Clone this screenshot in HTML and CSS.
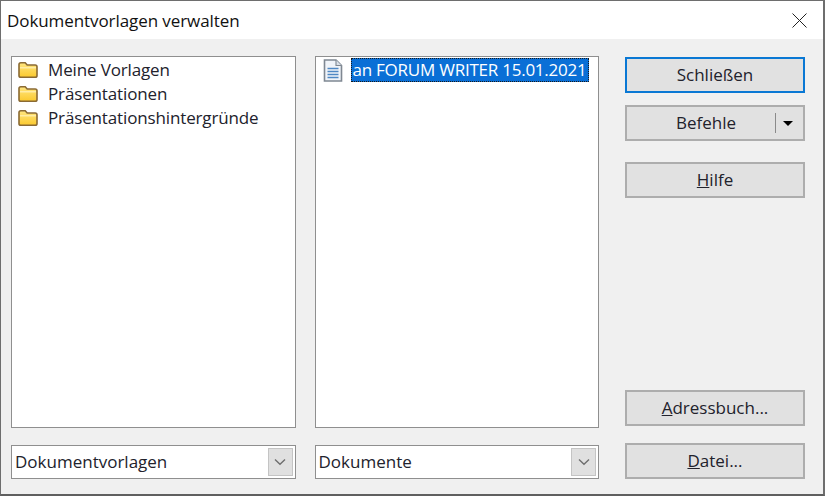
FILE: index.html
```html
<!DOCTYPE html>
<html lang="de">
<head>
<meta charset="utf-8">
<title>Dokumentvorlagen verwalten</title>
<link rel="stylesheet" href="styles.css">
</head>
<body>
<svg class="defs" width="0" height="0" aria-hidden="true">
  <defs>
    <linearGradient id="fold" x1="0" y1="0" x2="0" y2="1">
      <stop offset="0" stop-color="#ffe680"/>
      <stop offset="1" stop-color="#fbc92e"/>
    </linearGradient>
  </defs>
  <symbol id="folder" viewBox="0 0 20 18">
    <path d="M1 14.5V3.5Q1 1.8 2.8 1.8H7.2L9.2 4H17.2Q19 4 19 5.8V14.5Q19 16.3 17.2 16.3H2.8Q1 16.3 1 14.5Z" fill="url(#fold)" stroke="#8a6a34" stroke-width="1.6"/>
    <path d="M2 6.8H18" stroke="#fff2bd" stroke-width="1.1"/>
  </symbol>
  <symbol id="chev" viewBox="0 0 12 8">
    <path d="M1 1.5L6 6.2L11 1.5" fill="none" stroke="#6e6e6e" stroke-width="1.4"/>
  </symbol>
</svg>
<div class="window">
  <header class="titlebar">
    <span class="title">Dokumentvorlagen verwalten</span>
    <svg class="close" viewBox="0 0 15 15" width="15" height="15"><path d="M.5.5L14.5 14.5M14.5.5L.5 14.5" stroke="#222" stroke-width="1" fill="none"/></svg>
  </header>
  <main class="content">
    <section class="column">
      <ul class="list">
        <li class="row"><svg class="icon"><use href="#folder"/></svg><span class="name">Meine Vorlagen</span></li>
        <li class="row"><svg class="icon"><use href="#folder"/></svg><span class="name">Präsentationen</span></li>
        <li class="row"><svg class="icon"><use href="#folder"/></svg><span class="name">Präsentationshintergründe</span></li>
      </ul>
      <div class="combo"><span class="name">Dokumentvorlagen</span><span class="combo-btn"><svg width="12" height="8"><use href="#chev"/></svg></span></div>
    </section>
    <section class="column">
      <ul class="list">
        <li class="row">
          <svg class="doc" viewBox="0 0 20 23" width="20" height="23">
            <path d="M1.5 1H13L18.5 6.5V22H1.5Z" fill="#f0f4f9" stroke="#7f8892" stroke-width="1.6"/>
            <path d="M13 1V6.5H18.5" fill="#d9e0e8" stroke="#7f8892" stroke-width="1.1"/>
            <path d="M4.5 9.5H15.5M4.5 12.5H15.5M4.5 15.5H15.5M4.5 18.5H15.5" stroke="#4f88c4" stroke-width="1.4"/>
          </svg>
          <span class="selected">an FORUM WRITER 15.01.2021</span>
        </li>
      </ul>
      <div class="combo"><span class="name">Dokumente</span><span class="combo-btn"><svg width="12" height="8"><use href="#chev"/></svg></span></div>
    </section>
    <aside class="actions">
      <button class="btn btn-default">Schließen</button>
      <button class="btn btn-split"><span class="split-label">Befehle</span><span class="split-sep"></span><span class="arrow"></span></button>
      <button class="btn btn-help"><u>H</u>ilfe</button>
      <button class="btn btn-address"><u>A</u>dressbuch...</button>
      <button class="btn btn-file"><u>D</u>atei...</button>
    </aside>
  </main>
</div>
</body>
</html>
```
FILE: styles.css
```css
* { box-sizing: border-box; }
html, body { margin: 0; padding: 0; }
body {
  width: 825px;
  height: 496px;
  overflow: hidden;
  font-family: "Open Sans", "Noto Sans", sans-serif;
  font-size: 17px;
  color: #22222c;
  background: #f0f0f0;
}
.defs { position: absolute; }
.window {
  width: 825px;
  height: 496px;
  display: flex;
  flex-direction: column;
  border-top: 1px solid #6e6e6e;
  border-left: 1px solid #6e6e6e;
  border-right: 2px solid #6e6e6e;
  border-bottom: 2px solid #5f5f5f;
}
.titlebar {
  height: 38px;
  flex: none;
  background: #fff;
  display: flex;
  align-items: center;
  justify-content: space-between;
  padding: 1px 16px 0 6px;
}
.title { letter-spacing: -0.08px; color: #111; }
.close { display: block; }
.content {
  flex: 1;
  display: flex;
  padding: 17px 18px 15px 10px;
  background: #f0f0f0;
}
.column {
  width: 285px;
  display: flex;
  flex-direction: column;
  gap: 17px;
  margin-right: 19px;
}
.column + .column { margin-right: 26px; }
.list {
  flex: 1;
  margin: 0;
  padding: 1px 0 0 6px;
  list-style: none;
  background: #fff;
  border: 1px solid #8f8f8f;
}
.row {
  height: 24px;
  display: flex;
  align-items: center;
  white-space: nowrap;
  letter-spacing: -0.14px;
}
.name { padding-bottom: 2px; }
.icon { width: 20px; height: 18px; margin-right: 10px; flex: none; }
.doc { margin: 0 8px 0 1px; flex: none; }
.selected {
  background: #0a6fd6;
  color: #fff;
  outline: 1px dotted #1a1a1a;
  outline-offset: -1px;
  padding: 0 2px;
  line-height: 24px;
  height: 24px;
  letter-spacing: -0.24px;
}
.combo {
  flex: none;
  height: 34px;
  background: #fff;
  border: 1px solid #8f8f8f;
  display: flex;
  align-items: center;
  justify-content: space-between;
  padding: 2px 2px 2px 3px;
}
.combo-btn {
  width: 25px;
  height: 28px;
  display: flex;
  align-items: center;
  justify-content: center;
  background: #e0e0e0;
  border: 1px solid #c4c4c4;
}
.actions {
  width: 180px;
  display: flex;
  flex-direction: column;
  padding-top: 1px;
}
.btn {
  width: 180px;
  height: 36px;
  flex: none;
  font: inherit;
  color: inherit;
  background: #e1e1e1;
  border: 2px solid #adadad;
  padding: 0 0 2px;
}
.btn-default { border-color: #0a78d4; }
.btn-split {
  margin-top: 12px;
  display: flex;
  align-items: center;
  padding-bottom: 0;
}
.split-label { width: 158px; margin-right: -10px; padding-bottom: 2px; text-align: center; }
.split-sep { width: 1px; height: 20px; background: #8a8a8a; }
.arrow {
  width: 0;
  height: 0;
  margin-left: 7px;
  border-left: 5px solid transparent;
  border-right: 5px solid transparent;
  border-top: 5px solid #000;
}
.btn-help { margin-top: 21px; }
.btn-address { margin-top: auto; }
.btn-file { margin-top: 17px; }
```
